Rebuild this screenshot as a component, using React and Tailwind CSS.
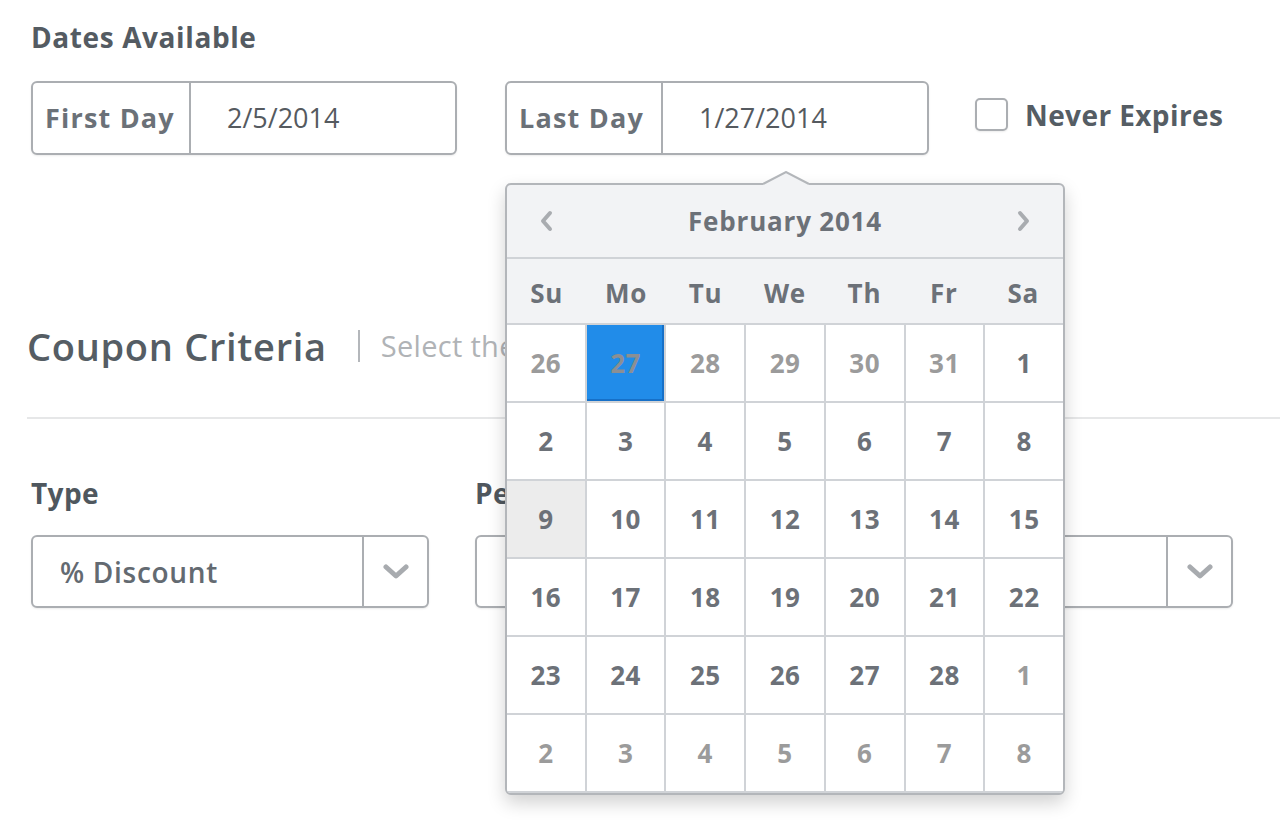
import React from "react";

const ChevronDown = () => (
  <svg width="26" height="16" viewBox="0 0 26 16" fill="none">
    <polyline points="3,3 13,12 23,3" stroke="#a8abaf" strokeWidth="5" strokeLinecap="round" strokeLinejoin="round" />
  </svg>
);

const ChevronSide = ({ dir }) => (
  <svg width="14" height="22" viewBox="0 0 14 22" fill="none">
    {dir === "left" ? (
      <polyline points="11,3 4,11 11,19" stroke="#a9acb0" strokeWidth="4" strokeLinecap="round" strokeLinejoin="round" />
    ) : (
      <polyline points="3,3 10,11 3,19" stroke="#a9acb0" strokeWidth="4" strokeLinecap="round" strokeLinejoin="round" />
    )}
  </svg>
);

const DateInput = ({ label, value, width, labelWidth }) => (
  <div
    className="flex h-[74px] rounded-[6px] border-2 border-[#abaeb2] bg-white shadow-[0_1px_2px_rgba(0,0,0,0.08)]"
    style={{ width }}
  >
    <div
      className="flex items-center border-r-2 border-[#abaeb2] pl-[12px] text-[27px] font-bold tracking-[1.2px] text-[#6b7178]"
      style={{ width: labelWidth }}
    >
      {label}
    </div>
    <div className="flex items-center pl-[36px] text-[27px] text-[#555a5f]">{value}</div>
  </div>
);

const Select = ({ value, width, divider }) => (
  <div
    className="flex h-[73px] rounded-[6px] border-2 border-[#abaeb2] bg-white shadow-[0_1px_2px_rgba(0,0,0,0.08)]"
    style={{ width }}
  >
    <div className="flex flex-1 items-center pl-[27px] text-[28px] font-semibold tracking-[0.7px] text-[#636a71]">{value}</div>
    <div className="flex items-center justify-center border-l-2 border-[#abaeb2]" style={{ width: divider }}>
      <ChevronDown />
    </div>
  </div>
);

const weeks = [
  [{ d: 26, o: true }, { d: 27, o: true, sel: true }, { d: 28, o: true }, { d: 29, o: true }, { d: 30, o: true }, { d: 31, o: true }, { d: 1 }],
  [{ d: 2 }, { d: 3 }, { d: 4 }, { d: 5 }, { d: 6 }, { d: 7 }, { d: 8 }],
  [{ d: 9, hover: true }, { d: 10 }, { d: 11 }, { d: 12 }, { d: 13 }, { d: 14 }, { d: 15 }],
  [{ d: 16 }, { d: 17 }, { d: 18 }, { d: 19 }, { d: 20 }, { d: 21 }, { d: 22 }],
  [{ d: 23 }, { d: 24 }, { d: 25 }, { d: 26 }, { d: 27 }, { d: 28 }, { d: 1, o: true }],
  [{ d: 2, o: true }, { d: 3, o: true }, { d: 4, o: true }, { d: 5, o: true }, { d: 6, o: true }, { d: 7, o: true }, { d: 8, o: true }],
];

const dayNames = ["Su", "Mo", "Tu", "We", "Th", "Fr", "Sa"];

const Calendar = () => (
  <div className="absolute left-0 top-[calc(100%+28px)] z-10 w-[560px] rounded-[6px] border-2 border-[#b3b6ba] bg-[#f2f3f5] shadow-[0_8px_18px_rgba(0,0,0,0.18)]">
    {/* pointer */}
    <svg className="absolute left-[256px] top-[-14px]" width="46" height="16" viewBox="0 0 46 16">
      <polygon points="0,13 23,1 46,13 46,16 0,16" fill="#f2f3f5" />
      <polyline points="0,13 23,1 46,13" fill="none" stroke="#b3b6ba" strokeWidth="2" />
    </svg>
    <div className="flex h-[74px] items-center justify-between border-b-2 border-[#d0d3d7] px-[32px]">
      <ChevronSide dir="left" />
      <div className="text-[26px] font-bold tracking-[0.8px] text-[#6c7178]">February 2014</div>
      <ChevronSide dir="right" />
    </div>
    <div className="grid h-[66px] grid-cols-7 items-center border-b-2 border-[#d0d3d7] pt-[4px]">
      {dayNames.map((n) => (
        <div key={n} className="text-center text-[26px] font-bold tracking-[0.8px] text-[#6c7178]">
          {n}
        </div>
      ))}
    </div>
    <div className="grid grid-cols-7 gap-[2px] overflow-hidden rounded-b-[4px] bg-[#d0d3d7] pb-[2px]">
      {weeks.flat().map((c, i) => (
        <div
          key={i}
          className={`flex h-[76px] items-center justify-center text-[26px] font-bold tracking-[0.5px] ${
            c.sel
              ? "bg-[#218ce9] text-[#8b8f93] shadow-[inset_-2px_-2px_0_#1670c8]"
              : c.hover
              ? "bg-[#ececec] text-[#6c7178]"
              : "bg-white"
          } ${!c.sel && (c.o ? "text-[#9b9b9b]" : "text-[#6c7178]")}`}
        >
          {c.d}
        </div>
      ))}
    </div>
  </div>
);

export default function App() {
  return (
    <div className="relative min-h-screen overflow-hidden bg-white font-['Open_Sans',sans-serif]">
      <div className="pl-[31px] pt-[21px]">
        <h2 className="text-[28px] font-bold leading-[32px] tracking-[0.6px] text-[#545b62]">Dates Available</h2>
        <div className="mt-[28px] flex items-start">
          <DateInput label="First Day" value="2/5/2014" width={426} labelWidth={158} />
          <div className="relative ml-[48px]">
            <DateInput label="Last Day" value="1/27/2014" width={424} labelWidth={156} />
            <Calendar />
          </div>
          <label className="ml-[46px] mt-[17px] flex items-center gap-[17px]">
            <span className="h-[33px] w-[33px] rounded-[5px] border-2 border-[#abaeb2] bg-white shadow-[0_1px_2px_rgba(0,0,0,0.08)]" />
            <span className="text-[28px] font-bold leading-[32px] tracking-[0.4px] text-[#555d64]">Never Expires</span>
          </label>
        </div>
      </div>

      <div className="mt-[169px] pl-[27px]">
        <div className="flex w-[478px] items-center overflow-hidden whitespace-nowrap">
          <h2 className="shrink-0 text-[38px] font-semibold leading-[44px] tracking-[0.7px] text-[#555d64]">Coupon Criteria</h2>
          <span className="ml-[31px] h-[32px] w-[2px] shrink-0 bg-[#b4b7bb]" />
          <span className="ml-[21px] shrink-0 text-[29px] tracking-[0.3px] text-[#b0b3b6]">Select the criteria for this coupon</span>
        </div>
        <div className="mt-[49px] h-[2px] bg-[#e6e7e8]" />
        <div className="mt-[58px] flex gap-[46px] pl-[4px]">
          <div>
            <div className="text-[28px] font-bold leading-[32px] tracking-[0.4px] text-[#4f575e]">Type</div>
            <div className="mt-[26px]">
              <Select value="% Discount" width={398} divider={65} />
            </div>
          </div>
          <div>
            <div className="w-[30px] overflow-hidden whitespace-nowrap text-[28px] font-bold leading-[32px] tracking-[0.4px] text-[#4f575e]">
              Percentage
            </div>
            <div className="mt-[26px]">
              <Select value="" width={758} divider={65} />
            </div>
          </div>
        </div>
      </div>
    </div>
  );
}
